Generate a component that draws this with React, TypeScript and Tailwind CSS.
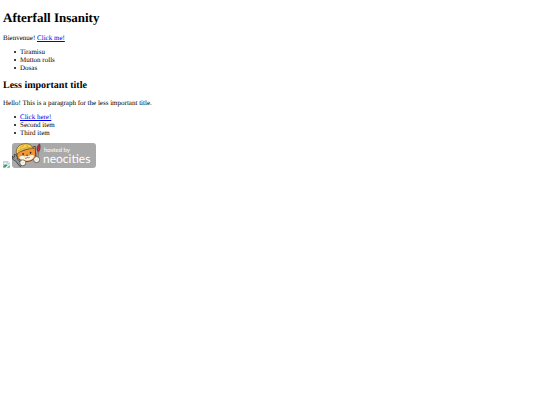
function BrokenImage() {
  return (
    <svg className="h-[7px] w-[7px]" viewBox="0 0 16 16" role="img" aria-label="Missing image">
      <path d="M1 1h10l4 4v10H1z" fill="#c9dcf5" stroke="#a5a5a5" />
      <path d="M11 1v4h4" fill="#fff" stroke="#a5a5a5" />
      <ellipse cx="5.5" cy="5.5" rx="2.5" ry="1.5" fill="#fff" />
      <path d="M1 15V12c2-4 6-5 9-2l-5 5z" fill="#43a047" />
      <path d="M8 15 15 9v6z" fill="#54ad50" />
      <path d="M5 16 16 7v2L8 16z" fill="#fff" />
    </svg>
  );
}

function NeocitiesBadge() {
  return (
    <svg className="h-[25px] w-[84px]" viewBox="0 0 84 25" role="img" aria-label="Hosted by Neocities">
      <rect width="84" height="25" rx="3" fill="#a9a9a9" />
      {/* wrench */}
      <path d="m2.3 11.2.2 2.7-1.6.7-.4-1.7c-.7 2.5.4 4.5 2.6 4.6l5 6.2 2.3-2-5-5.9c.6-2.1-.7-4.2-3.1-4.6z" fill="#8d939a" stroke="#3b3b3d" strokeWidth=".8" />
      {/* brush */}
      <path d="m25.7 7.3 1.3.4-1.8 9.5-1.4-.4z" fill="#d8b28b" stroke="#4d3430" strokeWidth=".5" />
      <path d="M25.4 7.8c-1-2.2-.3-4.9 2.2-7 .8 1.8.9 5-.6 7.4z" fill="#b8303f" stroke="#55212a" strokeWidth=".6" />
      {/* cat */}
      <path d="M4.8 9.5 20 4.6l3.2-1.4.2 4.9.1 3.6c.2 4.2-3.8 6.4-8.6 6.8-5.4.3-9.4-2-9.9-5.6z" fill="#f0953a" stroke="#46301f" strokeWidth=".8" />
      <path d="M7.1 14.5c1.4-1.8 3.4-1.6 5.3-1l2.3-1 2.6.2c1.7-.9 3.6-.8 5 .2-.8 2.9-3.6 4.4-7.2 4.7-3.7.2-6.8-.9-8-3.1z" fill="#fff4e4" />
      <path d="M4.3 9.8C3.7 5 7 1.6 12 .8c4.6-.6 7.6 1 8.7 3.9l1.5.9c-5.9-.2-12.1 1.2-17.4 5.4z" fill="#f8cf4d" stroke="#665024" strokeWidth=".7" />
      <path d="M5.8 8.2c5-3 9.7-4 14.4-3.6M8.3 5.5c.7-1.5 2.1-2.6 3.8-3.1m3.5 1.6c-.1-.9-.5-1.6-1.1-2" fill="none" stroke="#b7872a" strokeWidth=".6" />
      <ellipse cx="11.1" cy="11.1" rx=".8" ry="1.1" fill="#302721" />
      <ellipse cx="18.6" cy="9.8" rx=".8" ry="1.1" fill="#302721" />
      <path d="m14.3 12.2 1.7-.2-.8 1.1zM12.9 15c1.1.7 2.1.2 2.4-.9.7.9 1.7.8 2.5 0" fill="none" stroke="#4a3026" strokeWidth=".6" />
      {/* paws */}
      <circle cx="10.8" cy="19.8" r="3" fill="#fff8ed" stroke="#4b4038" strokeWidth=".7" />
      <circle cx="24.6" cy="16.6" r="3" fill="#fff8ed" stroke="#4b4038" strokeWidth=".7" />
      <path d="m9.9 19.1.3 1.7m1.4-1.8.2 1.6m12-4.5.2 1.6m1.4-1.8v1.7" stroke="#c8b6a5" strokeWidth=".4" />
      <text x="32" y="9" className="fill-white font-[Lato,sans-serif] text-[6px]">hosted by</text>
      <text x="31" y="20" className="fill-white font-[Lato,sans-serif] text-[12px]">neocities</text>
    </svg>
  );
}

const bulletItem =
  "flex items-center gap-1 before:size-0.5 before:rounded-full before:bg-black before:content-['']";

export default function App() {
  return (
    <main className="bg-white px-[3px] py-2.5 font-['Liberation_Serif',serif] text-[7px] leading-2 text-black [text-rendering:geometricPrecision]">
      <h1 className="text-[13px] leading-4 font-bold">Afterfall Insanity</h1>
      <p className="mt-2">
        Bienvenue!{" "}
        <a href="#" className="text-[#0000ee] underline">
          Click me!
        </a>
      </p>
      <ul className="mt-1.5 pl-[11px]">
        <li className={bulletItem}>Tiramisu</li>
        <li className={bulletItem}>Mutton rolls</li>
        <li className={bulletItem}>Dosas</li>
      </ul>

      <h2 className="mt-2 text-[10px] leading-3 font-bold">Less important title</h2>
      <p className="mt-[7px]">Hello! This is a paragraph for the less important title.</p>
      <ul className="mt-1.5 pl-[11px]">
        <li className={bulletItem}>
          <a href="#" className="text-[#0000ee] underline">
            Click here!
          </a>
        </li>
        <li className={bulletItem}>Second item</li>
        <li className={bulletItem}>Third item</li>
      </ul>

      <div className="mt-1.5 flex items-end gap-0.5">
        <BrokenImage />
        <a href="#">
          <NeocitiesBadge />
        </a>
      </div>
    </main>
  );
}
